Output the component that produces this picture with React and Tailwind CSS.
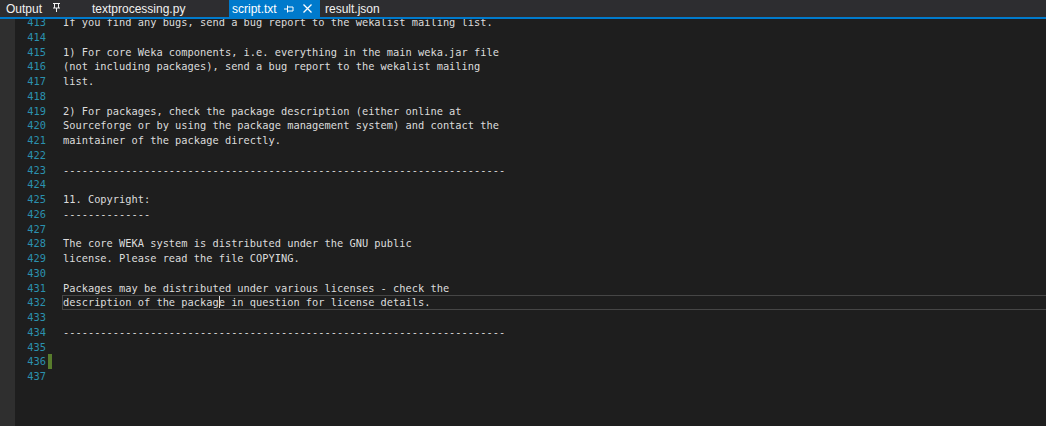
import React from 'react';

const dashes = '-'.repeat(71);

const lines = [
  [413, 'If you find any bugs, send a bug report to the wekalist mailing list.'],
  [414, ''],
  [415, '1) For core Weka components, i.e. everything in the main weka.jar file'],
  [416, '(not including packages), send a bug report to the wekalist mailing'],
  [417, 'list.'],
  [418, ''],
  [419, '2) For packages, check the package description (either online at'],
  [420, 'Sourceforge or by using the package management system) and contact the'],
  [421, 'maintainer of the package directly.'],
  [422, ''],
  [423, dashes],
  [424, ''],
  [425, '11. Copyright:'],
  [426, '--------------'],
  [427, ''],
  [428, 'The core WEKA system is distributed under the GNU public'],
  [429, 'license. Please read the file COPYING.'],
  [430, ''],
  [431, 'Packages may be distributed under various licenses - check the'],
  [432, 'description of the package in question for license details.'],
  [433, ''],
  [434, dashes],
  [435, ''],
  [436, ''],
  [437, ''],
];

function PinVertical() {
  return (
    <svg width="8" height="10" viewBox="0 0 8 10" className="block">
      <path d="M0 1.5H7M1.5 1.5V6M5.5 1.5V6M0 6H7M3.5 6V10" stroke="#f1f1f1" strokeWidth="1" fill="none" />
    </svg>
  );
}

function PinHorizontal() {
  return (
    <svg width="10" height="8" viewBox="0 0 10 8" className="block">
      <path d="M0 4H3.5M3.5 0.5V7.5M3.5 2H9V6H3.5" stroke="#ffffff" strokeWidth="1" fill="none" />
    </svg>
  );
}

function CloseX() {
  return (
    <svg width="9" height="9" viewBox="0 0 9 9" className="block">
      <path d="M0.5 0.5L8.5 8.5M8.5 0.5L0.5 8.5" stroke="#ffffff" strokeWidth="1.3" fill="none" />
    </svg>
  );
}

function Row({ num, text }) {
  const current = num === 432;
  return (
    <div className="flex h-[14.76px] leading-[14.76px]">
      <div className="w-[31px] text-right text-[#2b91af]">{num}</div>
      <div className="w-[2px]" />
      <div className={num === 436 ? 'w-[4px] bg-[#587c2c]' : 'w-[4px]'} />
      <div className="w-[10px]" />
      <div
        className={
          current
            ? 'flex-1 border border-r-0 border-[#464646] text-[#dcdcdc] whitespace-pre leading-[12.76px]'
            : 'flex-1 border border-r-0 border-transparent text-[#dcdcdc] whitespace-pre leading-[12.76px]'
        }
      >
        {current ? (
          <>
            {text.slice(0, 25)}
            <span className="inline-block w-[1px] h-[12px] -mr-[1px] align-[-2px] bg-[#dcdcdc]" />
            {text.slice(25)}
          </>
        ) : (
          text
        )}
      </div>
    </div>
  );
}

export default function App() {
  return (
    <div className="w-[1046px] h-[426px] bg-[#1e1e1e] overflow-hidden flex flex-col">
      {/* tab strip */}
      <div className="h-[17px] bg-[#2d2d30] flex items-stretch text-[12px] text-[#f1f1f1] font-['Liberation_Sans',Arial,sans-serif]">
        <div className="w-[92px] pl-[6px] flex items-center gap-[11px]">
          <span>Output</span>
          <span className="-mt-[3px]"><PinVertical /></span>
        </div>
        <div className="w-[137px] flex items-center">
          <span>textprocessing.py</span>
        </div>
        <div className="w-[91px] bg-[#007acc] text-white pl-[3px] flex items-center">
          <span>script.txt</span>
          <span className="ml-[7px]"><PinHorizontal /></span>
          <span className="ml-[9px]"><CloseX /></span>
        </div>
        <div className="pl-[5px] flex items-center">
          <span>result.json</span>
        </div>
      </div>
      <div className="h-[2px] bg-[#007acc]" />

      {/* editor */}
      <div className="flex-1 flex overflow-hidden">
        <div className="w-[15px] bg-[#2f2f2f]" />
        <div className="flex-1 -mt-[4px] text-[10.35px] font-['DejaVu_Sans_Mono','Liberation_Mono',monospace]">
          {lines.map(([n, t]) => (
            <Row key={n} num={n} text={t} />
          ))}
        </div>
      </div>
    </div>
  );
}
